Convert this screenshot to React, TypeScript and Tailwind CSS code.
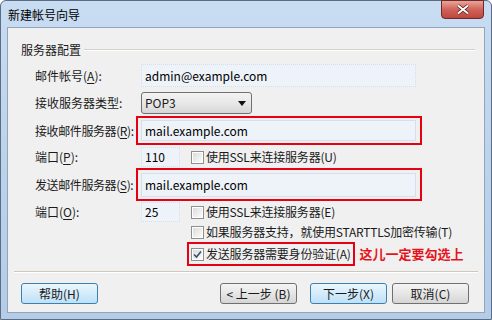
import React from 'react';

const FONT = { fontFamily: '"Noto Sans CJK SC", "Noto Sans", sans-serif' };

function Key({ k }: { k: string }) {
  return (
    <>
      (<span className="underline underline-offset-2">{k}</span>):
    </>
  );
}

function TextBox({ value, className = '' }: { value: string; className?: string }) {
  return (
    <div
      className={`flex items-center shrink-0 pl-[3px] bg-[#eef3fa] border border-dotted border-[#d3dfec] text-[12px] text-black whitespace-nowrap ${className}`}
    >
      {value}
    </div>
  );
}

function Check({ checked = false }: { checked?: boolean }) {
  return (
    <div className="w-[13px] h-[13px] shrink-0 border border-[#8e8f8f] bg-white p-[1px]">
      <div className="w-full h-full bg-gradient-to-br from-[#dcdcdc] to-[#fbfbfb] flex items-center justify-center">
        {checked && (
          <svg width="9" height="9" viewBox="0 0 9 9">
            <path d="M1 4.5 L3.5 7 L8 1.5" stroke="#3b4d6b" strokeWidth="1.6" fill="none" />
          </svg>
        )}
      </div>
    </div>
  );
}

function CheckRow({ label, checked }: { label: string; checked?: boolean }) {
  return (
    <div className="flex items-center gap-[2px] text-[12px] text-[#1a1a1a] whitespace-nowrap">
      <Check checked={checked} />
      <span className="tracking-[-0.2px]">{label}</span>
    </div>
  );
}

function Btn({ label, focused = false, className = '' }: { label: string; focused?: boolean; className?: string }) {
  return (
    <div
      className={`w-[77px] h-[21px] shrink-0 rounded-[3px] border flex items-center justify-center text-[12px] text-[#1a1a1a] whitespace-nowrap ${
        focused
          ? 'border-[#3c7fb1] bg-gradient-to-b from-[#eaf6fd] to-[#bfe1f8]'
          : 'border-[#707070] bg-gradient-to-b from-[#f4f4f4] via-[#e6e6e6] to-[#d5d5d5]'
      } ${className}`}
    >
      {label}
    </div>
  );
}

export default function App() {
  return (
    <div style={FONT} className="w-[492px] h-[320px] overflow-hidden bg-white">
      <div className="w-full h-full flex flex-col rounded-t-[6px] border border-[#5a6d84] bg-gradient-to-b from-[#c8dcf2] via-[#bcd3ec] to-[#b4cce8]">
        {/* Title bar */}
        <div className="h-[26px] flex items-start relative">
          <span className="mt-[5px] ml-[7px] text-[12px] text-black">新建帐号向导</span>
          <div className="absolute right-[7px] top-[-1px] w-[43px] h-[19px] rounded-b-[4px] border border-[#6b2b2b] bg-gradient-to-b from-[#e8a49a] via-[#d0625a] to-[#c0463c] flex items-center justify-center">
            <svg width="14" height="11" viewBox="0 0 14 11">
              <path d="M2 1.5 L12 9.5 M12 1.5 L2 9.5" stroke="#4a1a1a" strokeWidth="3.4" />
              <path d="M2 1.5 L12 9.5 M12 1.5 L2 9.5" stroke="#ffffff" strokeWidth="2" />
            </svg>
          </div>
        </div>

        {/* Client area */}
        <div className="mx-[6px] w-[478px] h-[286px] bg-[#f0f0f0] border border-[#93a5bb] flex flex-col">
          {/* Group header */}
          <div className="mt-[15px] h-[14px] flex items-center pl-[13px] pr-[9px] gap-[3px]">
            <span className="text-[12px] text-[#1a1a1a] whitespace-nowrap">服务器配置</span>
            <div className="flex-1 border-t border-[#d5cfc5] border-b border-b-white" />
          </div>

          <div className="pl-[27px] flex flex-col text-[12px] text-[#1a1a1a]">
            {/* 邮件帐号 */}
            <div className="mt-[7px] h-[23px] flex items-center">
              <span className="w-[106px] shrink-0 whitespace-nowrap">
                邮件帐号<Key k="A" />
              </span>
              <TextBox value="admin@example.com" className="w-[275px] h-[23px]" />
            </div>

            {/* 接收服务器类型 */}
            <div className="mt-[5px] h-[22px] flex items-center">
              <span className="w-[106px] shrink-0 whitespace-nowrap">接收服务器类型:</span>
              <div className="w-[111px] h-[22px] rounded-[3px] border border-[#707070] bg-gradient-to-b from-[#f3f3f3] via-[#e8e8e8] to-[#d6d6d6] flex items-center justify-between pl-[3px] pr-[5px]">
                <span>POP3</span>
                <svg width="8" height="5" viewBox="0 0 8 5">
                  <path d="M0 0 H8 L4 5 Z" fill="#111" />
                </svg>
              </div>
            </div>

            {/* 接收邮件服务器 */}
            <div className="mt-[2px] h-[29px] flex items-center">
              <span className="w-[101px] shrink-0 whitespace-nowrap tracking-[-0.4px]">
                接收邮件服务器<Key k="R" />
              </span>
              <div className="w-[286px] h-[29px] shrink-0 border-2 border-[#e60012] flex items-center pl-[3px]">
                <TextBox value="mail.example.com" className="w-[275px] h-[21px] border-solid border-[#c5d3e3]" />
              </div>
            </div>

            {/* 端口 P */}
            <div className="mt-[2px] h-[20px] flex items-center">
              <span className="w-[106px] shrink-0 whitespace-nowrap">
                端口<Key k="P" />
              </span>
              <TextBox value="110" className="w-[39px] h-[20px]" />
              <div className="ml-[11px]">
                <CheckRow label="使用SSL来连接服务器(U)" />
              </div>
            </div>

            {/* 发送邮件服务器 */}
            <div className="mt-[1px] h-[33px] flex items-center">
              <span className="w-[101px] shrink-0 whitespace-nowrap tracking-[-0.4px]">
                发送邮件服务器<Key k="S" />
              </span>
              <div className="w-[286px] h-[33px] shrink-0 border-2 border-[#e60012] flex items-center pl-[3px]">
                <TextBox value="mail.example.com" className="w-[275px] h-[24px] border-solid border-[#c5d3e3]" />
              </div>
            </div>

            {/* 端口 O */}
            <div className="mt-[1px] h-[20px] flex items-center">
              <span className="w-[106px] shrink-0 whitespace-nowrap">
                端口<Key k="O" />
              </span>
              <TextBox value="25" className="w-[39px] h-[20px]" />
              <div className="ml-[11px]">
                <CheckRow label="使用SSL来连接服务器(E)" />
              </div>
            </div>

            {/* STARTTLS */}
            <div className="mt-[1px] h-[18px] flex items-center pl-[156px]">
              <CheckRow label="如果服务器支持，就使用STARTTLS加密传输(T)" />
            </div>

            {/* 身份验证 */}
            <div className="mt-[1px] h-[24px] flex items-center pl-[152px]">
              <div className="h-[24px] shrink-0 border-2 border-[#e60012] flex items-center pl-[2px] pr-[2px]">
                <CheckRow label="发送服务器需要身份验证(A)" checked />
              </div>
              <span className="ml-[5px] text-[13px] font-bold text-[#e5141b] whitespace-nowrap">这儿一定要勾选上</span>
            </div>
          </div>

          {/* Separator */}
          <div className="mt-[5px] mx-[6px] border-t border-[#cfc7bb] border-b border-b-white" />

          {/* Buttons */}
          <div className="mt-[10px] flex items-center px-[13px]">
            <Btn label="帮助(H)" focused />
            <Btn label="< 上一步 (B)" className="ml-[122px]" />
            <Btn label="下一步(X)" focused className="ml-[13px]" />
            <Btn label="取消(C)" className="ml-[5px]" />
          </div>
        </div>
      </div>
    </div>
  );
}
